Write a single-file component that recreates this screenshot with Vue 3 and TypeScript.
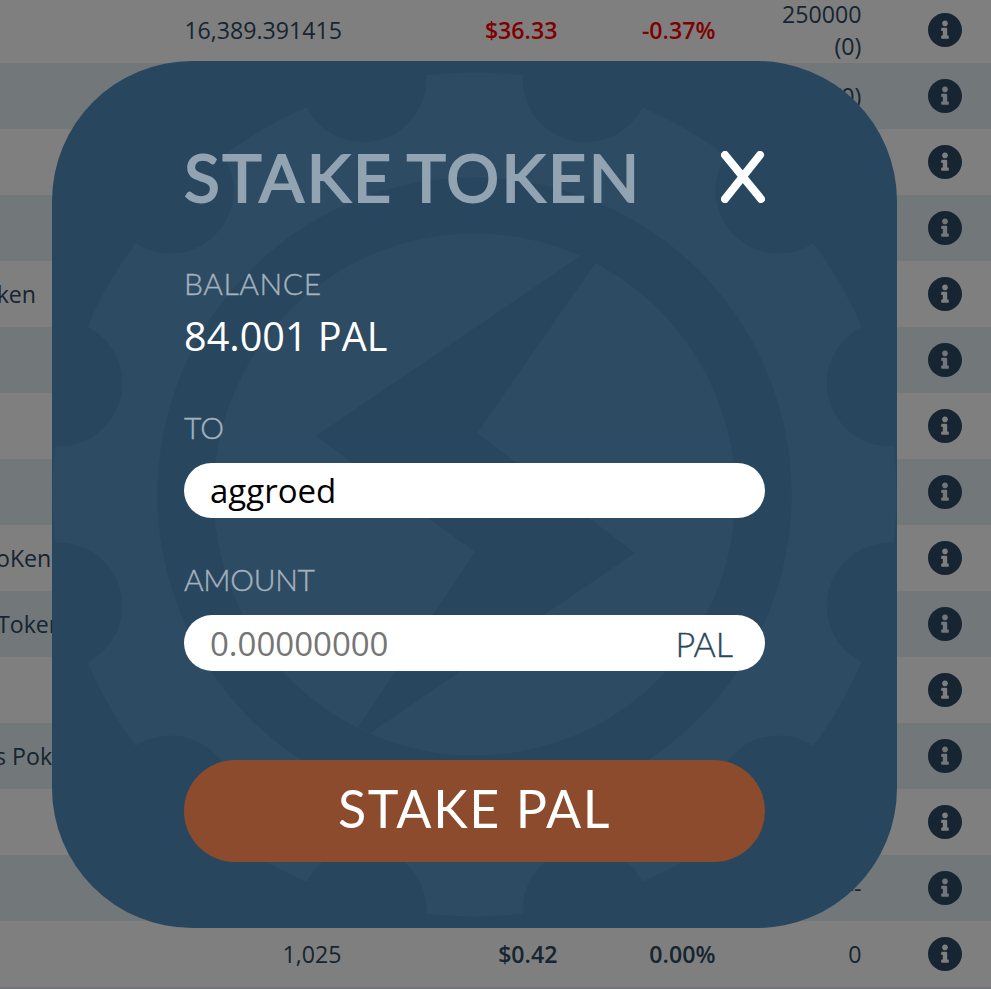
<script setup lang="ts">
import { ref } from 'vue';

interface TokenRow {
  name?: string;
  nameX?: number;
  supply?: string;
  price?: string;
  change?: string;
  volume?: string[];
  down?: boolean;
}

const rows: TokenRow[] = [
  { supply: '16,389.391415', price: '$36.33', change: '-0.37%', volume: ['250000', '(0)'], down: true },
  { volume: ['(0)'] },
  {},
  {},
  { name: 'Token', nameX: -30 },
  {},
  {},
  {},
  { name: 'oKen', nameX: -4 },
  { name: 'Token', nameX: -3 },
  {},
  { name: 's Pok', nameX: -5 },
  {},
  { volume: ['--'] },
  { supply: '1,025', price: '$0.42', change: '0.00%', volume: ['0'] },
  {},
];

// gear watermark, in modal coordinates
const cx = 422.5;
const cy = 433.5;
const notches = Array.from({ length: 12 }, (_, i) => {
  const a = ((15 + i * 30) * Math.PI) / 180;
  return { x: cx + 430 * Math.cos(a), y: cy + 430 * Math.sin(a) };
});

const to = ref('aggroed');
const amount = ref('');
</script>

<template>
  <div class="page">
    <div class="table">
      <div v-for="(row, i) in rows" :key="i" class="row">
        <div class="name">
          <span v-if="row.name" :style="{ marginLeft: row.nameX + 'px' }">{{ row.name }}</span>
        </div>
        <div class="num">{{ row.supply }}</div>
        <div class="num strong" :class="{ down: row.down }">{{ row.price }}</div>
        <div class="num strong" :class="{ down: row.down }">{{ row.change }}</div>
        <div class="num volume">
          <div v-for="line in row.volume" :key="line">{{ line }}</div>
        </div>
        <svg class="info" viewBox="8 8 496 496">
          <path
            d="M256 8C119.043 8 8 119.083 8 256c0 136.997 111.043 248 248 248s248-111.003 248-248C504 119.083 392.957 8 256 8zm0 110c23.196 0 42 18.804 42 42s-18.804 42-42 42-42-18.804-42-42 18.804-42 42-42zm56 254c0 6.627-5.373 12-12 12h-88c-6.627 0-12-5.373-12-12v-24c0-6.627 5.373-12 12-12h12v-64h-12c-6.627 0-12-5.373-12-12v-24c0-6.627 5.373-12 12-12h64c6.627 0 12 5.373 12 12v100h12c6.627 0 12 5.373 12 12v24z"
          />
        </svg>
      </div>
    </div>

    <div class="overlay">
      <div class="modal">
        <svg class="gear" viewBox="0 0 845 867">
          <circle :cx="cx" :cy="cy" r="422" fill="#2d4b63" />
          <circle v-for="(n, i) in notches" :key="i" :cx="n.x" :cy="n.y" r="63" fill="#28475f" />
          <circle :cx="cx" :cy="cy" r="289" fill="none" stroke="#28475f" stroke-width="56" />
          <polygon points="530,194 264,375 423,491 306,666 318,672 583,492 425,372 544,201" fill="#28475f" />
        </svg>

        <div class="modal-body">
          <div class="modal-header">
            <h2>STAKE TOKEN</h2>
            <button class="close-btn">
              <svg viewBox="0 0 44 52" width="44" height="52">
                <path d="M4 4 L40 48 M39 4 L4 48" fill="none" stroke="#fff" stroke-width="8" stroke-linecap="round" />
              </svg>
            </button>
          </div>

          <div class="label balance-label">BALANCE</div>
          <div class="balance">84.001 PAL</div>

          <div class="label to-label">TO</div>
          <div class="field">
            <input v-model="to" type="text" />
          </div>

          <div class="label amount-label">AMOUNT</div>
          <div class="field amount-field">
            <input v-model="amount" type="text" placeholder="0.00000000" />
            <span>PAL</span>
          </div>

          <button class="stake-btn">STAKE PAL</button>
        </div>
      </div>
    </div>
  </div>
</template>

<style scoped>
.page {
  width: 991px;
  height: 989px;
  overflow: hidden;
  position: relative;
  font-family: 'Open Sans', sans-serif;
  color: #2c4a63;
}

.table {
  margin-top: -3px;
}

.row {
  height: 66px;
  display: grid;
  grid-template-columns: 184.4px 157px 216px 158px 146px 129.6px;
  align-items: center;
  font-size: 23.15px;
  line-height: 32px;
  background: #fff;
}

.row:nth-child(even) {
  background: #e4eef5;
}

.name {
  white-space: nowrap;
  min-width: 0;
}

.num {
  text-align: right;
  white-space: nowrap;
}

.strong {
  font-weight: 600;
}

.down {
  color: #ff0000;
}

.info {
  width: 34px;
  height: 34px;
  margin-left: 66.6px;
  fill: #2c4a63;
}

.overlay {
  position: absolute;
  top: 0;
  left: 0;
  width: 100%;
  height: 100%;
  background: rgba(0, 0, 0, 0.5);
  padding: 61px 0 0 52px;
  box-sizing: border-box;
}

.modal {
  position: relative;
  width: 845px;
  height: 867px;
  background: #28475f;
  border-radius: 140px;
  overflow: hidden;
}

.gear {
  position: absolute;
  top: 0;
  left: 0;
  width: 845px;
  height: 867px;
}

.modal-body {
  position: relative;
  padding: 80px 132px 0;
}

.modal-header {
  display: flex;
  justify-content: space-between;
  align-items: center;
  height: 72px;
}

.modal-header h2 {
  margin: 0;
  font-family: Lato, sans-serif;
  font-size: 66px;
  line-height: 72px;
  font-weight: 400;
  letter-spacing: 2.6px;
  word-spacing: -4.5px;
  color: #92a3b2;
  -webkit-text-stroke: 2px #92a3b2;
}

.close-btn {
  background: none;
  border: none;
  padding: 0;
  width: 44px;
  height: 52px;
  cursor: pointer;
}

.label {
  font-family: Lato, sans-serif;
  font-size: 30px;
  font-weight: 300;
  line-height: 36px;
  color: #a4b2be;
  -webkit-text-stroke: 0.4px #a4b2be;
}

.balance-label {
  margin-top: 52px;
  letter-spacing: 0.6px;
}

.balance {
  margin-top: 6px;
  font-size: 39.6px;
  line-height: 58px;
  color: #fff;
}

.to-label {
  margin-top: 44px;
}

.amount-label {
  margin-top: 43px;
  letter-spacing: -0.3px;
}

.field {
  display: flex;
  align-items: center;
  height: 55px;
  margin-top: 18px;
  padding: 0 32px 0 26px;
  background: #fff;
  border-radius: 28px;
}

.field input {
  flex: 1;
  min-width: 0;
  border: none;
  outline: none;
  padding: 0;
  background: none;
  font-family: 'Open Sans', sans-serif;
  font-size: 33px;
  color: #000;
}

.amount-field {
  height: 56px;
}

.amount-field span {
  font-family: Lato, sans-serif;
  font-size: 34px;
  font-weight: 300;
  color: #28475f;
  -webkit-text-stroke: 0.4px #28475f;
}

.stake-btn {
  display: block;
  width: 100%;
  height: 102px;
  margin-top: 89px;
  padding: 0 0 6px;
  border: none;
  border-radius: 51px;
  background: #8c4b2d;
  color: #fff;
  font-family: Lato, sans-serif;
  font-size: 52px;
  letter-spacing: 1.6px;
  cursor: pointer;
}
</style>

<style>
html,
body {
  margin: 0;
  overflow: hidden;
}
</style>
